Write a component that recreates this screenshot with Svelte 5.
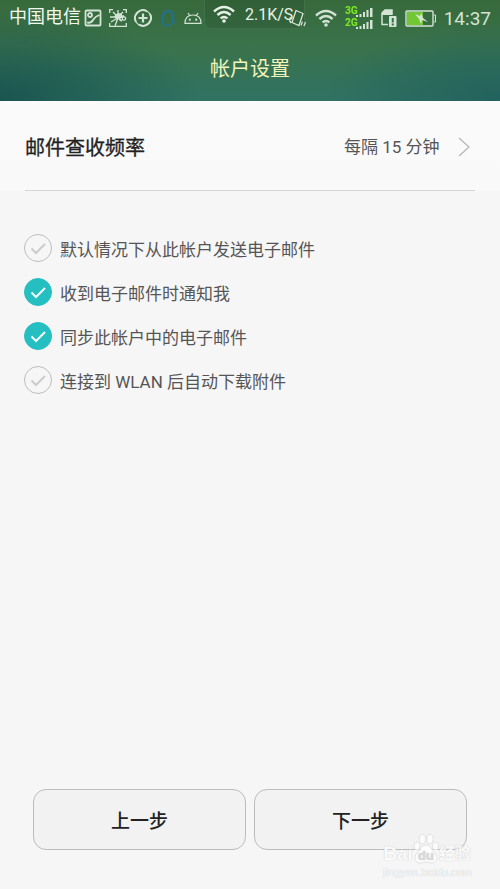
<script>
  let interval = $state('15');
  let options = $state([
    { id: 'default', label: '默认情况下从此帐户发送电子邮件', checked: false },
    { id: 'notify', label: '收到电子邮件时通知我', checked: true },
    { id: 'sync', label: '同步此帐户中的电子邮件', checked: true },
    { id: 'wlan', label: '连接到 WLAN 后自动下载附件', checked: false }
  ]);
</script>

{#snippet wifi(size)}
  <svg width={size} height={size} viewBox="0 0 22 22" fill="none" stroke="currentColor" stroke-width="2.4">
    <path d="M1 8.5Q11-.5 21 8.5M4.4 12Q11 6 17.6 12M7.6 15.4Q11 12.4 14.4 15.4" />
    <circle cx="11" cy="18" r="1.8" fill="currentColor" stroke="none" />
  </svg>
{/snippet}

<div class="screen">
  <header>
    <div class="status">
      <span class="carrier">中国电信</span>
      <div class="notices">
        <svg width="18" height="18" viewBox="0 0 18 18" fill="none" stroke="currentColor" stroke-width="1.8">
          <rect x="1.5" y="1.5" width="15" height="15" rx="1" />
          <circle cx="6" cy="6" r="2" />
          <path d="M3 13.5Q7 14.5 9 11T15.5 6" />
        </svg>
        <svg width="18" height="18" viewBox="0 0 18 18" fill="none" stroke="currentColor" stroke-width="1.3">
          <path d="M.7 4V.7H4M14 .7h3.3V4M.7 14v3.3H17.3V14" />
          <path d="M9 1v4M4 3l3 3M14 3l-3 3M1 8h5M2 13l5-3M9 8q-1 4-3 9" />
          <path d="M6 8q1-4 6-3l1 3-5 2Z" fill="currentColor" />
          <path d="M9 9l6-2M10 10l3 2" stroke-width="2" />
          <circle cx="15" cy="9.5" r="1.7" />
        </svg>
        <svg width="18" height="18" viewBox="0 0 18 18" fill="none" stroke="currentColor">
          <path d="M13 2.3A8 8 0 0 0 2 13M5 15.7A8 8 0 0 0 16 5" stroke-width="1.9" />
          <circle cx="9" cy="9" r="8" stroke-width="1.2" />
          <path d="M9 4.5v9M4.5 9h9" stroke-width="2.2" />
        </svg>
        <svg class="bell" width="18" height="18" viewBox="0 0 18 18" fill="none" stroke="currentColor" stroke-width="2.4">
          <path d="M4 13V7a5 5 0 0 1 10 0v6l2 1M4 13l-2 1M5 16h3M10 16h3" />
        </svg>
        <svg width="18" height="18" viewBox="0 0 18 18" fill="none" stroke="currentColor" stroke-width="1.2">
          <path d="M1 14.3Q1 6 9 6t8 8.3ZM4 4l2 3M14 4l-2 3" />
          <circle cx="5.8" cy="10.7" r=".5" />
          <circle cx="12.2" cy="10.7" r=".5" />
        </svg>
      </div>
      <div class="speed">
        {@render wifi(22)}
        <span>2.1K/S</span>
      </div>
      <div class="system">
        <svg width="18" height="18" viewBox="0 0 18 18" fill="none" stroke="currentColor" stroke-width="1.3">
          <path d="M7 1.5l7 3-4 12-7-3ZM1.5 8L.7 12l1.500 2M12 16.5l1.500-4M15 17l1.500-4" />
        </svg>
        {@render wifi(22)}
        <svg width="28" height="24" viewBox="0 0 28 24" fill="currentColor">
          <path d="M11 9h2v2h-2zM14.500 8h2v3h-2zM18 6h2v5h-2zM21.500 4h2v7h-2zM25 2h2.500v9H25zM11 21h2v2h-2zM14.500 20h2v3h-2zM18 18h2v5h-2zM21.500 16h2v7h-2zM25 14h2.500v9H25z" />
          <g class="network">
            <text x="0" y="8">3G</text>
            <text x="0" y="20">2G</text>
          </g>
        </svg>
        <svg width="16" height="18" viewBox="0 0 16 18">
          <path d="M7 15.500H1V4l3-3h7v5" fill="none" stroke="currentColor" stroke-width="1.5" />
          <path d="M1 6V4l3-3h7v5Z" fill="currentColor" />
          <rect x="8" y="7" width="7.5" height="11" rx="1" fill="currentColor" />
          <path d="M11.750 9v4.500M11.750 14.500v2" stroke="#34704f" stroke-width="2" />
        </svg>
        <svg width="31" height="17" viewBox="0 0 31 17">
          <rect x="1" y="1" width="27" height="15" rx="1" fill="none" stroke="currentColor" stroke-width="1.4" />
          <path d="M29 5h1.500v7H29" fill="none" stroke="currentColor" />
          <path d="M2 2h16v13H2z" fill="#72c832" />
          <path d="M10 4l5 2 1-3 2 5 5 4-6-2-1 4-2-5Z" fill="currentColor" />
        </svg>
        <time>14:37</time>
      </div>
    </div>
    <h1>帐户设置</h1>
  </header>

  <main>
    <div class="frequency">
      <label for="interval">邮件查收频率</label>
      <select id="interval" bind:value={interval}>
        <option value="15">每隔 15 分钟</option>
        <option value="30">每隔 30 分钟</option>
      </select>
      <svg width="12" height="20" viewBox="0 0 12 20" fill="none" stroke="#b9b9b9" stroke-width="1.4">
        <path d="M1 1l10 9-10 9" />
      </svg>
    </div>

    <div class="options">
      {#each options as option (option.id)}
        <div class="option">
          <span class="tick">
            <input id={option.id} type="checkbox" bind:checked={option.checked} />
            <svg width="28" height="28" viewBox="0 0 28 28" fill="none" stroke="currentColor" stroke-width="2">
              <path d="M7.500 14.500l4.500 4.500 9-9" />
            </svg>
          </span>
          <label for={option.id}>{option.label}</label>
        </div>
      {/each}
    </div>
  </main>

  <footer>
    <button type="button">上一步</button>
    <button type="button">下一步</button>
    <div class="watermark">
      <div class="brand">
        <span>Bai</span>
        <svg width="26" height="32" viewBox="0 0 26 32">
          <g fill="#fcfcfc" stroke="#e2e2e2">
            <ellipse cx="4" cy="13" rx="3" ry="4" />
            <ellipse cx="9.5" cy="6" rx="3.2" ry="4.5" />
            <ellipse cx="17" cy="6" rx="3.2" ry="4.5" />
            <ellipse cx="22.5" cy="13" rx="3" ry="4" />
            <path d="M13 12c5 0 5 5 9 8 4 4 2 10-3 10-3 0-4-1-6-1s-3 1-6 1c-5 0-7-6-3-10 4-3 4-8 9-8Z" />
          </g>
          <text x="13" y="27" text-anchor="middle">du</text>
        </svg>
        <span class="cn">经验</span>
      </div>
      <div class="site">jingyan.baidu.com</div>
    </div>
  </footer>
</div>

<style>
  :global(body) {
    margin: 0;
    background: #f6f6f6;
  }

  .screen {
    display: flex;
    flex-direction: column;
    min-height: 100vh;
    font-family: Roboto, "Noto Sans CJK SC", sans-serif;
    color: #555;
    background: #f6f6f6;
  }

  header {
    height: 101px;
    background:
      radial-gradient(ellipse 40% 90% at 0 100%, #1a5550, transparent),
      radial-gradient(ellipse 35% 80% at 100% 100%, #22625d, transparent),
      linear-gradient(#37693b, #3a734b 45%, #307263);
  }

  .status {
    position: relative;
    display: flex;
    align-items: center;
    justify-content: space-between;
    height: 36px;
    padding: 0 9px;
    color: #d3e3d4;
  }

  .status svg,
  .frequency svg {
    display: block;
    flex: none;
  }

  .carrier {
    font-size: 18px;
    line-height: 34px;
    height: 36px;
    color: #f0f7ee;
  }

  .notices {
    display: flex;
    gap: 7px;
    margin-left: 3px;
    margin-right: auto;
  }

  .bell {
    color: #23708c;
  }

  .system {
    position: relative;
    display: flex;
    align-items: center;
    gap: 8px;
  }

  .network {
    font: bold 10px Roboto, sans-serif;
    fill: #7be81c;
  }

  time {
    font-size: 19px;
  }

  .speed {
    position: absolute;
    top: 0;
    left: 204px;
    display: flex;
    align-items: center;
    gap: 10px;
    box-sizing: border-box;
    width: 101px;
    height: 29px;
    padding: 0 8px;
    border: 1px solid #427049;
    border-top: 0;
    border-radius: 0 0 7px 7px;
    font-size: 16px;
    color: #e8f1e6;
    background: rgb(35 75 45 / 0.3);
  }

  h1 {
    height: 65px;
    margin: 0;
    font-size: 20px;
    font-weight: 400;
    line-height: 66px;
    text-align: center;
    color: #f2f4b9;
  }

  main {
    flex: 1;
    background: linear-gradient(#fafafa, #f9f9f9 89px, #f6f6f6 90px);
  }

  .frequency {
    display: flex;
    align-items: center;
    height: 89px;
    margin: 0 25px;
    padding-top: 2px;
    padding-right: 5px;
    box-sizing: border-box;
    height: 90px;
    border-bottom: 1px solid #d6d6d6;
  }

  .frequency label {
    flex: 1;
    font-size: 20px;
    color: #222;
    -webkit-text-stroke: 0.3px #222;
  }

  select {
    appearance: none;
    margin: 0 18px 0 0;
    padding: 0;
    border: 0;
    font: inherit;
    font-size: 17px;
    color: #555;
    background: none;
  }

  .options {
    display: flex;
    flex-direction: column;
    gap: 16px;
    padding: 43px 24px;
  }

  .option {
    display: flex;
    align-items: center;
    gap: 8px;
    height: 28px;
    font-size: 17px;
  }

  .tick {
    display: grid;
    color: #ccc;
  }

  .tick input,
  .tick svg {
    grid-area: 1 / 1;
  }

  .tick svg {
    pointer-events: none;
  }

  .tick input {
    appearance: none;
    width: 28px;
    height: 28px;
    margin: 0;
    border: 1px solid #bdbdbd;
    border-radius: 50%;
  }

  .tick input:checked {
    border-color: #25bfc1;
    background: #25bfc1;
  }

  .tick input:checked + svg {
    color: #f2ffff;
  }

  footer {
    position: relative;
    display: flex;
    gap: 8px;
    padding: 0 33px 39px;
  }

  button {
    flex: 1;
    height: 61px;
    padding: 0;
    border: 1px solid #bcbcbc;
    border-radius: 13px;
    font: inherit;
    font-size: 19px;
    font-weight: 500;
    color: #222;
    background: #f2f2f2;
  }

  .watermark {
    position: absolute;
    right: 28px;
    bottom: 10px;
    pointer-events: none;
    color: #fafafa;
    text-shadow: 0 0 1px #ccc, 0 0 1px #ddd;
  }

  .brand {
    display: flex;
    align-items: flex-end;
    font: bold 19px/22px "Liberation Sans", "Noto Sans CJK SC", sans-serif;
  }

  .brand text {
    font-size: 13px;
    fill: #dadada;
  }

  .cn {
    font-size: 16px;
  }

  .site {
    font: 11px/14px "Liberation Sans", sans-serif;
  }
</style>
